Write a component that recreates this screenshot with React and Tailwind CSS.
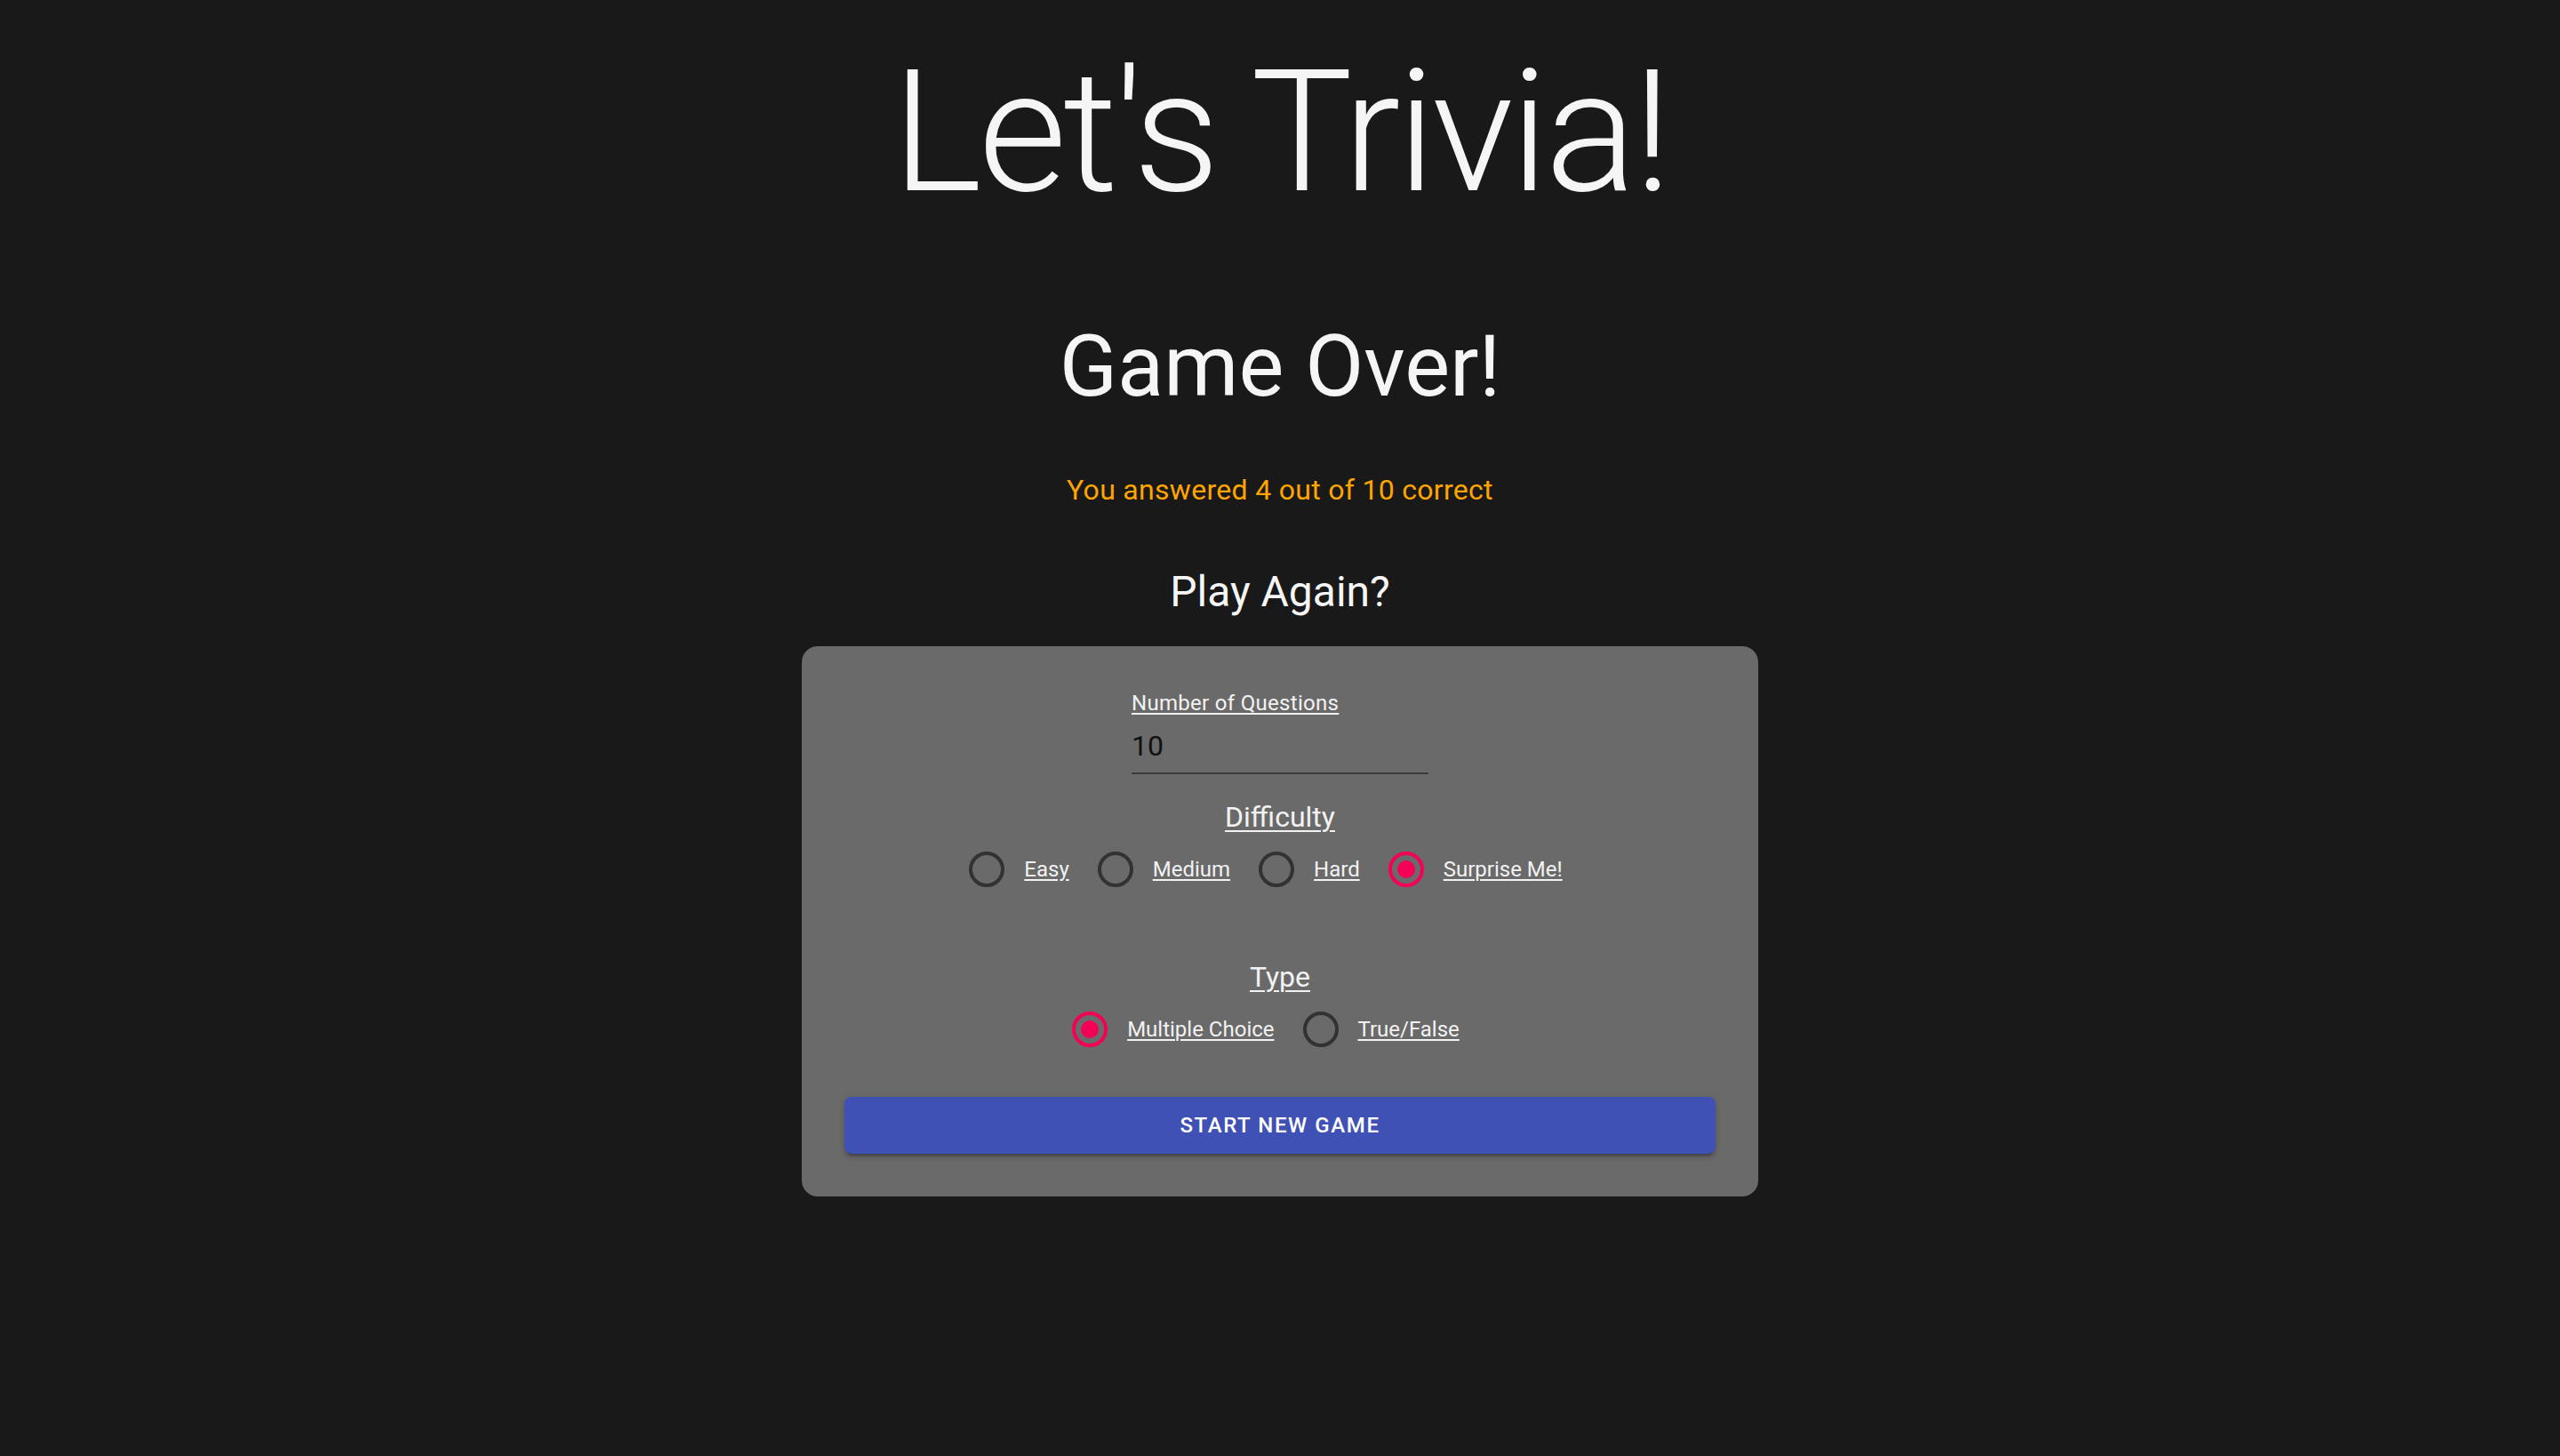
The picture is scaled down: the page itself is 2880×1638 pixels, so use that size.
import React, { useState } from 'react';

const RadioIcon = ({ checked }) => (
  <svg width="48" height="48" viewBox="0 0 48 48" className="block">
    <circle cx="24" cy="24" r="18" fill="none" stroke={checked ? '#f50057' : '#323232'} strokeWidth="4" />
    {checked && <circle cx="24" cy="24" r="10" fill="#f50057" />}
  </svg>
);

const RadioOption = ({ label, checked, onSelect }) => (
  <label
    className="flex items-center -ml-[22px] mr-[32px] cursor-pointer"
    onClick={onSelect}
  >
    <span className="p-[18px]">
      <RadioIcon checked={checked} />
    </span>
    <span className="text-[24px] leading-[1.5] text-[#f2f2f2] underline decoration-2 underline-offset-[3px]">
      {label}
    </span>
  </label>
);

const RadioRow = ({ options, value, onChange }) => (
  <div className="flex justify-center items-center">
    {options.map((opt) => (
      <RadioOption key={opt} label={opt} checked={value === opt} onSelect={() => onChange(opt)} />
    ))}
  </div>
);

const App = () => {
  const [amount, setAmount] = useState('10');
  const [difficulty, setDifficulty] = useState('Surprise Me!');
  const [type, setType] = useState('Multiple Choice');

  return (
    <div className="min-h-screen bg-[#191919] text-[#f5f5f5] font-['Roboto',sans-serif] flex flex-col items-center">
      <h1 className="mt-[37px] text-[192px] font-light leading-[224px] tracking-[-4px]">Let's Trivia!</h1>

      <h3 className="mt-[95px] text-[96px] font-normal leading-[112px]">Game Over!</h3>

      <p className="mt-[59px] text-[32px] leading-[48px] tracking-[0.3px] text-[#ffa500]">
        You answered 4 out of 10 correct
      </p>

      <h5 className="mt-[59px] text-[48px] leading-[64px]">Play Again?</h5>

      <div className="mt-[29px] w-[1076px] bg-[#6a6a6a] rounded-[18px] px-[48px] pt-[50px] pb-[48px] flex flex-col items-center">
        <div className="w-[334px] flex flex-col">
          <span className="text-[24px] leading-[28px] tracking-[0.3px] text-[#f2f2f2] underline decoration-2 underline-offset-[3px]">
            Number of Questions
          </span>
          <input
            type="number"
            value={amount}
            onChange={(e) => setAmount(e.target.value)}
            className="mt-[15px] bg-transparent text-[32px] leading-[38px] h-[38px] text-[#111111] outline-none border-b-2 border-[#3d3d3d] box-content pb-[11px] [appearance:textfield]"
          />
        </div>

        <span className="mt-[29px] text-[32px] leading-[38px] text-[#f2f2f2] underline decoration-2 underline-offset-[4px]">
          Difficulty
        </span>
        <div className="-mt-[2px]">
          <RadioRow
            options={['Easy', 'Medium', 'Hard', 'Surprise Me!']}
            value={difficulty}
            onChange={setDifficulty}
          />
        </div>

        <span className="mt-[60px] text-[32px] leading-[38px] text-[#f2f2f2] underline decoration-2 underline-offset-[4px]">
          Type
        </span>
        <div className="-mt-[2px]">
          <RadioRow
            options={['Multiple Choice', 'True/False']}
            value={type}
            onChange={setType}
          />
        </div>

        <button className="mt-[34px] w-full h-[64px] bg-[#3f51b5] rounded-[8px] text-white text-[24px] font-medium tracking-[1.6px] shadow-[0_6px_2px_-4px_rgba(0,0,0,0.2),0_4px_4px_0_rgba(0,0,0,0.14),0_2px_10px_0_rgba(0,0,0,0.12)]">
          START NEW GAME
        </button>
      </div>
    </div>
  );
};

export default App;
